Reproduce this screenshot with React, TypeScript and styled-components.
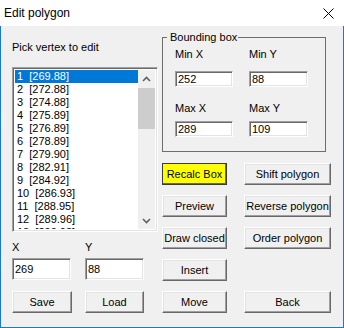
import React from 'react';
import styled, { createGlobalStyle } from 'styled-components';

const GlobalStyle = createGlobalStyle`
  html, body { margin: 0; padding: 0; background: #ffffff; }
  body { font-family: 'Liberation Sans', Arial, sans-serif; font-size: 11px; font-weight: 400; color: #000; }
`;

const Window = styled.div`
  width: 344px;
  height: 328px;
  display: flex;
  flex-direction: column;
  background: #f0f0f0;
`;

const TitleBar = styled.div`
  height: 26px;
  flex: none;
  display: flex;
  align-items: center;
  justify-content: space-between;
  background: #ffffff;
  padding: 0 10px 0 4px;
  font-size: 12px;
  line-height: 26px;
`;

const CloseIcon = () => (
  <svg width="11" height="11" viewBox="0 0 11 11">
    <path d="M0.5 0.5 L10.5 10.5 M10.5 0.5 L0.5 10.5" stroke="#000" strokeWidth="1" />
  </svg>
);

const Body = styled.div`
  flex: 1;
  display: flex;
  gap: 4px;
  padding: 0 12px 0 11px;
  border: 1px solid #1979d2;
  border-top: none;
`;

const LeftColumn = styled.div`
  width: 146px;
  display: flex;
  flex-direction: column;
`;

const Caption = styled.div`
  line-height: 13px;
  margin: 15px 0 13px;
`;

const sunken = `
  box-sizing: border-box;
  border: 1px solid;
  border-color: #a0a0a0 #ffffff #ffffff #a0a0a0;
  box-shadow: inset 1px 1px #696969, inset -1px -1px #e3e3e3;
`;

const ListBox = styled.div`
  ${sunken}
  height: 165px;
  padding: 2px;
  background: #ffffff;
  display: flex;
  overflow: hidden;
`;

const Items = styled.div`
  flex: 1;
  overflow: hidden;
`;

const Item = styled.div<{ $selected?: boolean }>`
  height: 13px;
  line-height: 13px;
  padding-left: 2px;
  white-space: pre;
  background: ${(p) => (p.$selected ? '#0078d7' : 'transparent')};
  color: ${(p) => (p.$selected ? '#ffffff' : '#000000')};
`;

const ScrollBar = styled.div`
  width: 17px;
  display: flex;
  flex-direction: column;
  background: #f0f0f0;
`;

const ScrollArrow = styled.div`
  height: 17px;
  flex: none;
  display: flex;
  align-items: center;
  justify-content: center;
`;

const ScrollThumb = styled.div`
  height: 41px;
  margin-top: 1px;
  background: #cdcdcd;
`;

const ScrollTrack = styled.div`
  flex: 1;
`;

const Chevron = ({ down }: { down?: boolean }) => (
  <svg width="9" height="6" viewBox="0 0 9 6">
    <path
      d={down ? 'M1 1 L4.5 4.5 L8 1' : 'M1 5 L4.5 1.5 L8 5'}
      fill="none"
      stroke="#606060"
      strokeWidth="1.6"
    />
  </svg>
);

const FieldGrid = styled.div`
  display: grid;
  grid-template-columns: 60px 59px;
  column-gap: 13px;
  margin-top: 9px;
`;

const Label = styled.div<{ $mt?: number }>`
  line-height: 13px;
  margin-top: ${(p) => p.$mt ?? 0}px;
`;

const Edit = styled.input<{ $h: number; $w: number; $mt?: number }>`
  ${sunken}
  width: ${(p) => p.$w}px;
  height: ${(p) => p.$h}px;
  margin: ${(p) => p.$mt ?? 0}px 0 0;
  padding: 0 2px;
  background: #ffffff;
  font-family: 'Liberation Sans', Arial, sans-serif;
  font-size: 11px;
  font-weight: 400;
  color: #000;
  outline: none;
`;

const Button = styled.button<{ $yellow?: boolean; $w?: number; $mt?: number }>`
  box-sizing: border-box;
  height: 22px;
  width: ${(p) => (p.$w ? `${p.$w}px` : 'auto')};
  margin: ${(p) => p.$mt ?? 0}px 0 0;
  padding: 0;
  font-family: 'Liberation Sans', Arial, sans-serif;
  font-size: 11px;
  font-weight: 400;
  color: #000;
  white-space: nowrap;
  background: ${(p) => (p.$yellow ? '#ffff00' : '#f0f0f0')};
  border: 1px solid;
  border-color: ${(p) => (p.$yellow ? '#3c3c3c' : '#ffffff #696969 #696969 #ffffff')};
  box-shadow: ${(p) =>
    p.$yellow ? 'inset -1px -1px #696969' : 'inset -1px -1px #a0a0a0, inset 1px 1px #e3e3e3'};
`;

const RightColumn = styled.div`
  width: 169px;
  display: flex;
  flex-direction: column;
  padding-top: 11px;
`;

const GroupBox = styled.div`
  position: relative;
  box-sizing: border-box;
  width: 164px;
  height: 115px;
  border: 1px solid #6d6d6d;
  padding: 10px 0 0 12px;
  display: grid;
  grid-template-columns: 58px 58px;
  grid-template-rows: 13px 16px 13px 16px;
  column-gap: 16px;
`;

const GroupTitle = styled.span`
  position: absolute;
  top: -7px;
  left: 4px;
  padding: 0 1px 0 3px;
  line-height: 13px;
  background: #f0f0f0;
`;

const ButtonGrid = styled.div`
  margin-top: 11px;
  display: grid;
  grid-template-columns: 65px 87px;
  grid-auto-rows: 22px;
  column-gap: 17px;
  row-gap: 10px;
`;

const vertices = [
  '1  [269.88]',
  '2  [272.88]',
  '3  [274.88]',
  '4  [275.89]',
  '5  [276.89]',
  '6  [278.89]',
  '7  [279.90]',
  '8  [282.91]',
  '9  [284.92]',
  '10  [286.93]',
  '11  [288.95]',
  '12  [289.96]',
  '13  [290.98]',
];

export default function App() {
  return (
    <>
      <GlobalStyle />
      <Window>
        <TitleBar>
          <span>Edit polygon</span>
          <CloseIcon />
        </TitleBar>
        <Body>
          <LeftColumn>
            <Caption>Pick vertex to edit</Caption>
            <ListBox>
              <Items>
                {vertices.map((v, i) => (
                  <Item key={v} $selected={i === 0}>{v}</Item>
                ))}
              </Items>
              <ScrollBar>
                <ScrollArrow><Chevron /></ScrollArrow>
                <ScrollThumb />
                <ScrollTrack />
                <ScrollArrow><Chevron down /></ScrollArrow>
              </ScrollBar>
            </ListBox>
            <FieldGrid>
              <Label>X</Label>
              <Label>Y</Label>
              <Edit $w={59} $h={22} $mt={4} defaultValue="269" />
              <Edit $w={59} $h={22} $mt={4} defaultValue="88" />
              <Button $w={60} $mt={11}>Save</Button>
              <Button $w={59} $mt={11}>Load</Button>
            </FieldGrid>
          </LeftColumn>
          <RightColumn>
            <GroupBox>
              <GroupTitle>Bounding box</GroupTitle>
              <Label>Min X</Label>
              <Label>Min Y</Label>
              <Edit $w={58} $h={16} $mt={10} defaultValue="252" />
              <Edit $w={59} $h={16} $mt={10} defaultValue="88" />
              <Label $mt={25}>Max X</Label>
              <Label $mt={25}>Max Y</Label>
              <Edit $w={58} $h={16} $mt={31} defaultValue="289" />
              <Edit $w={59} $h={16} $mt={31} defaultValue="109" />
            </GroupBox>
            <ButtonGrid>
              <Button $yellow>Recalc Box</Button>
              <Button>Shift polygon</Button>
              <Button>Preview</Button>
              <Button>Reverse polygon</Button>
              <Button>Draw closed</Button>
              <Button>Order polygon</Button>
              <Button>Insert</Button>
              <span />
              <Button>Move</Button>
              <Button>Back</Button>
            </ButtonGrid>
          </RightColumn>
        </Body>
      </Window>
    </>
  );
}
